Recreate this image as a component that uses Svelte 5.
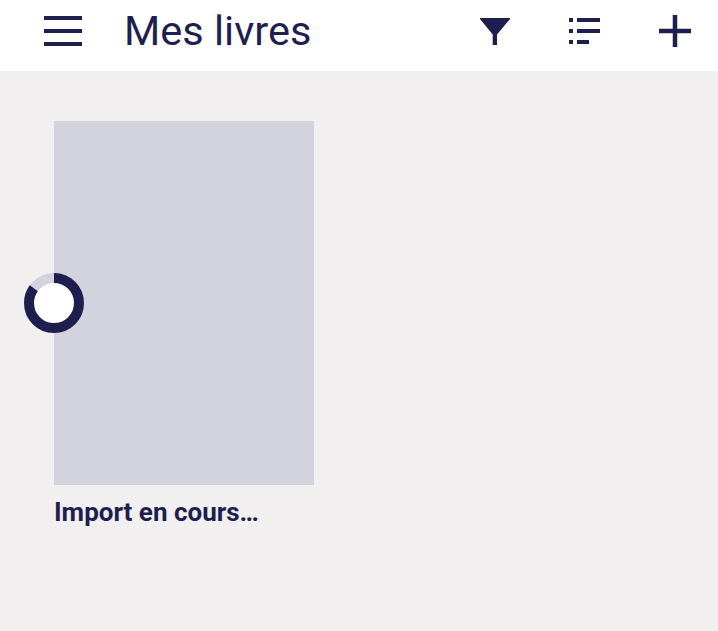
<script lang="ts">
  let progress = 0.845;
  const r = 25;
  const circ = 2 * Math.PI * r;
</script>

<div class="page">
  <header class="topbar">
    <button class="icon-btn menu" aria-label="Menu">
      <svg width="38" height="30" viewBox="0 0 38 30" fill="#1f1f4f">
        <rect x="0" y="0" width="38" height="4" />
        <rect x="0" y="13" width="38" height="4" />
        <rect x="0" y="26" width="38" height="4" />
      </svg>
    </button>
    <h1 class="title">Mes livres</h1>
    <div class="actions">
      <button class="icon-btn filter" aria-label="Filtrer">
        <svg width="30" height="27" viewBox="0 0 30 27" fill="#1f1f4f">
          <path d="M0 0H30V1L17 16.500V27H12.700V16.500L0 1Z" />
        </svg>
      </button>
      <button class="icon-btn" aria-label="Trier">
        <svg width="32" height="26" viewBox="0 0 32 26" fill="#1f1f4f">
          <rect x="0" y="0" width="4" height="4" />
          <rect x="8" y="0" width="23" height="4" />
          <rect x="0" y="11" width="4" height="4" />
          <rect x="8" y="11" width="23" height="4" />
          <rect x="0" y="22" width="4" height="4" />
          <rect x="8" y="22" width="12" height="4" />
        </svg>
      </button>
      <button class="icon-btn" aria-label="Ajouter">
        <svg width="32" height="32" viewBox="0 0 32 32" fill="#1f1f4f">
          <rect x="0" y="13.750" width="32" height="4.500" />
          <rect x="13.750" y="0" width="4.500" height="32" />
        </svg>
      </button>
    </div>
  </header>

  <main class="shelf">
    <article class="book">
      <div class="cover">
        <div class="ring">
          <svg width="60" height="60" viewBox="0 0 60 60">
            <circle cx="30" cy="30" r="28" fill="#fff" />
            <circle cx="30" cy="30" r={r} fill="none" stroke="#d2d3dc" stroke-width="10" />
            <circle
              cx="30"
              cy="30"
              r={r}
              fill="none"
              stroke="#1f1f4f"
              stroke-width="10"
              stroke-dasharray="{progress * circ} {circ}"
              transform="rotate(-90 30 30)"
            />
          </svg>
        </div>
      </div>
      <p class="label">Import en cours…</p>
    </article>
  </main>
</div>

<style>
  :global(body) {
    margin: 0;
    background: #f1eff0;
  }

  .page {
    width: 718px;
    height: 631px;
    overflow: hidden;
    background: #f1eff0;
    font-family: Roboto, "Liberation Sans", sans-serif;
    color: #1f1f4f;
  }

  .topbar {
    height: 62px;
    display: flex;
    align-items: center;
    padding: 0 27px 9px 44px;
    background: #fff;
  }

  .icon-btn {
    display: flex;
    padding: 0;
    border: 0;
    background: none;
  }

  .menu {
    margin-right: 42px;
  }

  .title {
    flex: 1;
    margin: 0;
    font-size: 41.500px;
    font-weight: 400;
    line-height: 1;
    color: #1f1f4f;
  }

  .actions {
    display: flex;
    align-items: center;
    gap: 58px;
  }

  .filter {
    margin-right: 1px;
  }

  .shelf {
    padding: 50px 54px;
  }

  .book {
    width: 260px;
  }

  .cover {
    position: relative;
    height: 364px;
    background: #d2d3dc;
  }

  .ring {
    position: absolute;
    left: -30px;
    top: 152px;
    width: 60px;
    height: 60px;
  }

  .ring svg {
    display: block;
  }

  .label {
    margin: 12px 0 0;
    font-size: 26px;
    line-height: 30px;
    font-weight: 700;
    white-space: nowrap;
  }
</style>
